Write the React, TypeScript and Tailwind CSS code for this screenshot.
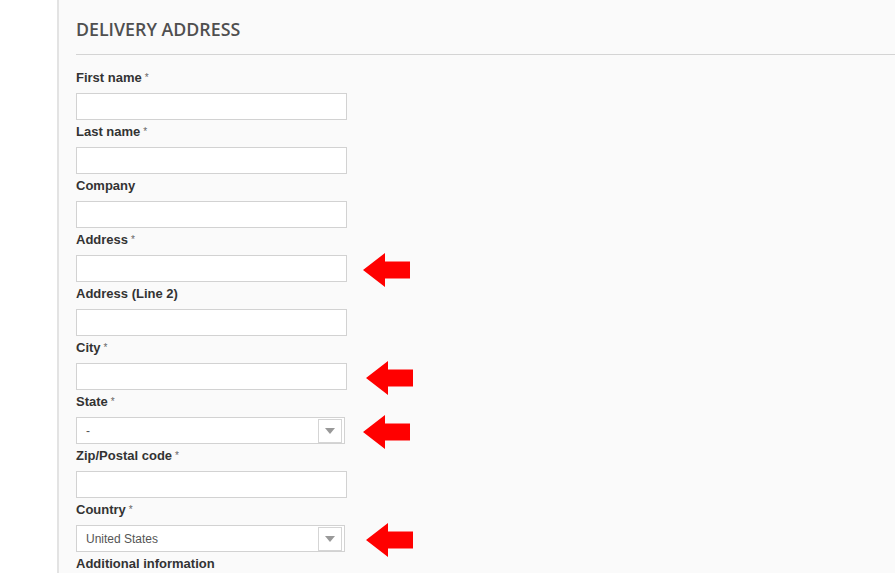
import React from "react";

const Arrow = () => (
  <svg width="48" height="34" viewBox="0 0 48 34" className="shrink-0">
    <polygon points="0,17 22,0 22,8.5 47,8.5 47,25.5 22,25.5 22,34" fill="#ff0000" />
  </svg>
);

const Label = ({ text, req }: { text: string; req?: boolean }) => (
  <div className="h-[27px] pt-[4px] text-[13px] leading-[16px] font-bold text-[#333]">
    {text}
    {req && <sup className="ml-[3px] text-[10px] font-normal text-[#666] relative -top-[1px]">*</sup>}
  </div>
);

const Input = () => (
  <div className="w-[271px] h-[27px] border border-[#d2d2d2] bg-white shrink-0" />
);

const Select = ({ value }: { value: string }) => (
  <div className="w-[269px] h-[27px] border border-[#d2d2d2] bg-white flex items-center justify-between pl-[9px] pr-[2px] shrink-0">
    <span className="text-[12px] text-[#555]">{value}</span>
    <div className="w-[24px] h-[24px] border border-[#d5d5d5] flex items-center justify-center">
      <svg width="10" height="6" viewBox="0 0 10 6">
        <polygon points="0,0 10,0 5,6" fill="#999" />
      </svg>
    </div>
  </div>
);

type Field = { label: string; req?: boolean; type?: "input" | "select"; value?: string; arrow?: boolean; gap?: number };

const fields: Field[] = [
  { label: "First name", req: true },
  { label: "Last name", req: true },
  { label: "Company" },
  { label: "Address", req: true, arrow: true, gap: 16 },
  { label: "Address (Line 2)" },
  { label: "City", req: true, arrow: true, gap: 19 },
  { label: "State", req: true, type: "select", value: "-", arrow: true, gap: 18 },
  { label: "Zip/Postal code", req: true },
  { label: "Country", req: true, type: "select", value: "United States", arrow: true, gap: 21 },
];

export default function App() {
  return (
    <div className="w-[895px] h-[573px] overflow-hidden bg-white flex" style={{ fontFamily: "Arial, 'Liberation Sans', sans-serif" }}>
      <div className="w-[57px] shrink-0 bg-white" />
      <div className="flex-1 bg-[#fafafa] border-l-2 border-[#e3e3e3] pl-[17px]">
        <h2
          className="pt-[17px] h-[55px] text-[17.8px] leading-[24px] font-semibold text-[#4f4f4f] border-b border-[#d4d4d4]"
          style={{ fontFamily: "'Open Sans', sans-serif" }}
        >
          DELIVERY ADDRESS
        </h2>
        <div className="pt-[11px]">
          {fields.map((f) => (
            <div key={f.label}>
              <Label text={f.label} req={f.req} />
              <div className="flex items-center h-[27px]">
                {f.type === "select" ? <Select value={f.value || ""} /> : <Input />}
                {f.arrow && (
                  <div style={{ marginLeft: f.gap ?? 16 }} className="flex mt-[2px]">
                    <Arrow />
                  </div>
                )}
              </div>
            </div>
          ))}
          <Label text="Additional information" />
        </div>
      </div>
    </div>
  );
}
